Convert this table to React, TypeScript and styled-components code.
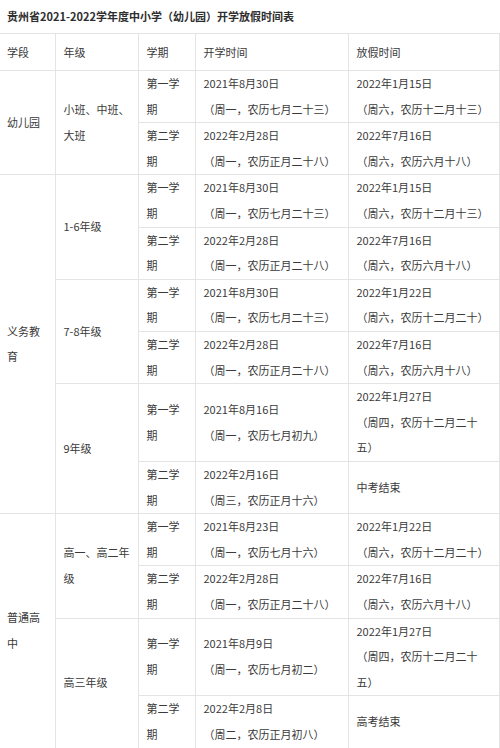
import React from "react";
import styled, { createGlobalStyle } from "styled-components";

const Global = createGlobalStyle`
  html, body { margin: 0; padding: 0; background: #fff; }
  body { font-family: "Noto Sans CJK SC", "Noto Sans", sans-serif; color: #333; }
`;

const Page = styled.div`
  width: 500px;
  overflow: hidden;
`;

const Title = styled.div`
  height: 33px;
  line-height: 33px;
  padding-left: 7px;
  font-size: 11px;
  font-weight: 700;
  color: #2e2e2e;
  white-space: nowrap;
`;

const Table = styled.table`
  width: 499px;
  border-collapse: collapse;
  table-layout: fixed;
  font-size: 11px;
  color: #3a3a3a;
`;

const Th = styled.th<{ $first?: boolean }>`
  text-align: left;
  font-weight: 400;
  line-height: 25.6px;
  padding: 5.5px 8px 5px ${(p) => (p.$first ? "7px" : "8px")};
  border: 1px solid #e4e4e4;
  ${(p) => (p.$first ? "border-left: none;" : "")}
  white-space: nowrap;
`;

const Td = styled.td<{ $first?: boolean }>`
  text-align: left;
  vertical-align: middle;
  line-height: 25.6px;
  padding: 0 8px 0 ${(p) => (p.$first ? "7px" : "8px")};
  border: 1px solid #e4e4e4;
  ${(p) => (p.$first ? "border-left: none;" : "")}
  white-space: nowrap;
`;

const Lines: React.FC<{ lines: string[] }> = ({ lines }) => (
  <>
    {lines.map((l, i) => (
      <React.Fragment key={i}>
        {i > 0 && <br />}
        {l}
      </React.Fragment>
    ))}
  </>
);

type Row = {
  stage?: { lines: string[]; span: number };
  grade?: { lines: string[]; span: number };
  term: string[];
  start: string[];
  end: string[];
};

const T1 = ["第一学", "期"];
const T2 = ["第二学", "期"];

const rows: Row[] = [
  {
    stage: { lines: ["幼儿园"], span: 2 },
    grade: { lines: ["小班、中班、", "大班"], span: 2 },
    term: T1,
    start: ["2021年8月30日", "（周一，农历七月二十三）"],
    end: ["2022年1月15日", "（周六，农历十二月十三）"],
  },
  {
    term: T2,
    start: ["2022年2月28日", "（周一，农历正月二十八）"],
    end: ["2022年7月16日", "（周六，农历六月十八）"],
  },
  {
    stage: { lines: ["义务教", "育"], span: 6 },
    grade: { lines: ["1-6年级"], span: 2 },
    term: T1,
    start: ["2021年8月30日", "（周一，农历七月二十三）"],
    end: ["2022年1月15日", "（周六，农历十二月十三）"],
  },
  {
    term: T2,
    start: ["2022年2月28日", "（周一，农历正月二十八）"],
    end: ["2022年7月16日", "（周六，农历六月十八）"],
  },
  {
    grade: { lines: ["7-8年级"], span: 2 },
    term: T1,
    start: ["2021年8月30日", "（周一，农历七月二十三）"],
    end: ["2022年1月22日", "（周六，农历十二月二十）"],
  },
  {
    term: T2,
    start: ["2022年2月28日", "（周一，农历正月二十八）"],
    end: ["2022年7月16日", "（周六，农历六月十八）"],
  },
  {
    grade: { lines: ["9年级"], span: 2 },
    term: T1,
    start: ["2021年8月16日", "（周一，农历七月初九）"],
    end: ["2022年1月27日", "（周四，农历十二月二十", "五）"],
  },
  {
    term: T2,
    start: ["2022年2月16日", "（周三，农历正月十六）"],
    end: ["中考结束"],
  },
  {
    stage: { lines: ["普通高", "中"], span: 4 },
    grade: { lines: ["高一、高二年", "级"], span: 2 },
    term: T1,
    start: ["2021年8月23日", "（周一，农历七月十六）"],
    end: ["2022年1月22日", "（周六，农历十二月二十）"],
  },
  {
    term: T2,
    start: ["2022年2月28日", "（周一，农历正月二十八）"],
    end: ["2022年7月16日", "（周六，农历六月十八）"],
  },
  {
    grade: { lines: ["高三年级"], span: 2 },
    term: T1,
    start: ["2021年8月9日", "（周一，农历七月初二）"],
    end: ["2022年1月27日", "（周四，农历十二月二十", "五）"],
  },
  {
    term: T2,
    start: ["2022年2月8日", "（周二，农历正月初八）"],
    end: ["高考结束"],
  },
];

export default function App() {
  return (
    <Page>
      <Global />
      <Title>贵州省2021-2022学年度中小学（幼儿园）开学放假时间表</Title>
      <Table>
        <colgroup>
          <col style={{ width: 55 }} />
          <col style={{ width: 83 }} />
          <col style={{ width: 57 }} />
          <col style={{ width: 153 }} />
          <col style={{ width: 151 }} />
        </colgroup>
        <thead>
          <tr>
            <Th $first>学段</Th>
            <Th>年级</Th>
            <Th>学期</Th>
            <Th>开学时间</Th>
            <Th>放假时间</Th>
          </tr>
        </thead>
        <tbody>
          {rows.map((r, i) => (
            <tr key={i}>
              {r.stage && (
                <Td $first rowSpan={r.stage.span}>
                  <Lines lines={r.stage.lines} />
                </Td>
              )}
              {r.grade && (
                <Td rowSpan={r.grade.span}>
                  <Lines lines={r.grade.lines} />
                </Td>
              )}
              <Td>
                <Lines lines={r.term} />
              </Td>
              <Td>
                <Lines lines={r.start} />
              </Td>
              <Td>
                <Lines lines={r.end} />
              </Td>
            </tr>
          ))}
        </tbody>
      </Table>
    </Page>
  );
}
